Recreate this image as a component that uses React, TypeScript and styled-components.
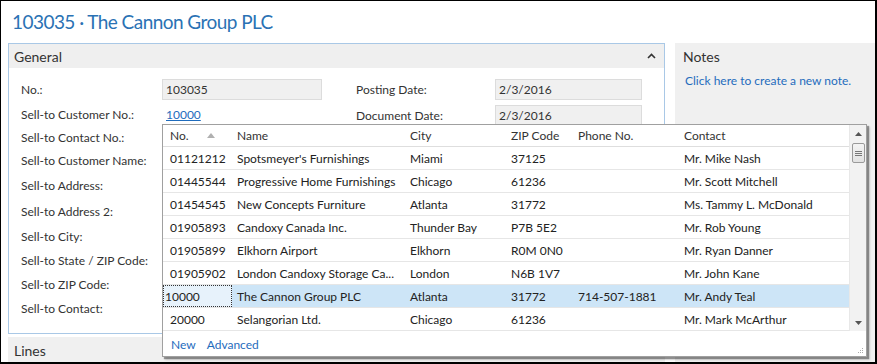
import React from "react";
import styled, { createGlobalStyle } from "styled-components";

const FONT = `"Segoe UI", Lato, "Liberation Sans", sans-serif`;

const Global = createGlobalStyle`
  html, body { margin: 0; padding: 0; background: #fff; }
  body { font-family: ${FONT}; font-size: 12px; color: #333; }
  * { box-sizing: border-box; }
`;

const Frame = styled.div`
  width: 877px;
  height: 364px;
  border-style: solid;
  border-color: #000;
  border-width: 1px 2px 2px 1px;
  background: #fff;
  position: relative;
  overflow: hidden;
  display: flex;
  flex-direction: column;
`;

const Title = styled.h1`
  margin: 0;
  height: 42px;
  padding: 9px 0 0 11px;
  font-family: ${FONT};
  font-weight: 400;
  font-size: 19px;
  letter-spacing: -0.55px;
  line-height: 24px;
  color: #2a72b4;
`;

const Content = styled.div`
  flex: 1;
  display: flex;
  gap: 10px;
  padding-left: 7px;
  min-height: 0;
`;

const LeftCol = styled.div`
  width: 657px;
  display: flex;
  flex-direction: column;
`;

const Panel = styled.section`
  border: 1px solid #a9c8e6;
  height: 291px;
  display: flex;
  flex-direction: column;
`;

const PanelHeader = styled.div`
  height: 24px;
  background: #efefef;
  display: flex;
  align-items: center;
  justify-content: space-between;
  padding: 0 8px 0 5px;
  font-size: 14px;
  color: #333;
`;

const PanelBody = styled.div`
  display: grid;
  grid-template-columns: 335px 1fr;
  padding: 8px 0 0 12px;
`;

const FieldCol = styled.div`
  display: flex;
  flex-direction: column;
`;

const Row = styled.div<{ $h: number }>`
  height: ${(p) => p.$h}px;
  display: grid;
  grid-template-columns: 141px 1fr;
  align-items: center;
`;

const RightRow = styled.div<{ $h: number }>`
  height: ${(p) => p.$h}px;
  display: grid;
  grid-template-columns: 139px 147px;
  align-items: center;
`;

const Label = styled.span`
  color: #333;
  white-space: nowrap;
`;

const Box = styled.div<{ $w: number }>`
  width: ${(p) => p.$w}px;
  height: 21px;
  background: #f0f0f0;
  border: 1px solid #dcdcdc;
  padding: 0 3px;
  display: flex;
  align-items: center;
  color: #333;
`;

const Link = styled.a<{ $u?: boolean }>`
  color: #1f6cbd;
  text-decoration: ${(p) => (p.$u ? "underline" : "none")};
  cursor: pointer;
  padding-left: 4px;
`;

const LinesHeader = styled.div`
  margin-top: 3px;
  flex: 1;
  background: #f0f0f0;
  padding: 5px 0 0 6px;
  font-size: 14px;
  color: #333;
`;

const Notes = styled.aside`
  flex: 1;
  background: #f0f0f0;
  padding: 5px 8px;
`;

const NotesTitle = styled.div`
  font-size: 14px;
  color: #333;
  height: 20px;
`;

const NotesLink = styled.a`
  display: block;
  margin-top: 5px;
  padding-left: 2px;
  color: #1f6cbd;
  font-size: 12px;
`;

const Dropdown = styled.div`
  position: absolute;
  left: 161px;
  top: 123px;
  width: 705px;
  height: 233px;
  background: #fff;
  border: 1px solid #a0a0a0;
  box-shadow: 2px 2px 1px rgba(0, 0, 0, 0.35), 3px 3px 2px rgba(0, 0, 0, 0.15);
  display: grid;
  grid-template-columns: 686px 17px;
  grid-template-rows: 206px 1fr;
`;

const Table = styled.div`
  display: flex;
  flex-direction: column;
`;

const cols = "69px 173px 101px 67px 106px 1fr";

const HeadRow = styled.div`
  height: 22px;
  display: grid;
  grid-template-columns: ${cols};
  align-items: center;
  border-bottom: 1px solid #dedede;
  color: #333;
`;

const DataRow = styled.div<{ $sel?: boolean }>`
  height: 23px;
  display: grid;
  grid-template-columns: ${cols};
  align-items: stretch;
  border-bottom: 1px solid #e6e6e6;
  background: ${(p) => (p.$sel ? "#cde5f7" : "#fff")};
  color: #222;
`;

const Cell = styled.div<{ $first?: boolean; $focus?: boolean }>`
  display: flex;
  align-items: center;
  padding-left: ${(p) => (p.$first ? 7 : 5)}px;
  white-space: nowrap;
  overflow: hidden;
  ${(p) =>
    p.$focus
      ? `background: #e7f2fb; border: 1px dotted #333; padding-left: 1px;`
      : ""}
`;

const SortArrow = styled.span`
  margin-left: 18px;
  width: 0;
  height: 0;
  border-left: 4px solid transparent;
  border-right: 4px solid transparent;
  border-bottom: 5px solid #b0b0b0;
`;

const Scrollbar = styled.div`
  background: #f2f2f2;
  border-left: 1px solid #e8e8e8;
  display: flex;
  flex-direction: column;
  align-items: center;
`;

const ScrollBtn = styled.div`
  height: 17px;
  display: flex;
  align-items: center;
  justify-content: center;
`;

const Thumb = styled.div`
  width: 13px;
  height: 20px;
  margin-top: 1px;
  border: 1px solid #9a9a9a;
  border-radius: 2px;
  background: linear-gradient(#f4f4f4, #e2e2e2);
  display: flex;
  align-items: center;
  justify-content: center;
`;

const Track = styled.div`
  flex: 1;
`;

const Footer = styled.div`
  display: flex;
  gap: 11px;
  align-items: center;
  padding-left: 8px;
  height: 24px;
  margin-top: 1px;
`;

const FooterLink = styled.a`
  color: #1f6cbd;
  font-size: 12px;
`;

const Grip = styled.div`
  display: flex;
  align-items: flex-end;
  justify-content: flex-end;
  padding: 0 2px 2px 0;
`;

const leftRows: [string, number][] = [
  ["No.:", 26],
  ["Sell-to Customer No.:", 24],
  ["Sell-to Contact No.:", 22],
  ["Sell-to Customer Name:", 25],
  ["Sell-to Address:", 25],
  ["Sell-to Address 2:", 26],
  ["Sell-to City:", 24],
  ["Sell-to State / ZIP Code:", 24],
  ["Sell-to ZIP Code:", 24],
  ["Sell-to Contact:", 24],
];

const data = [
  ["01121212", "Spotsmeyer's Furnishings", "Miami", "37125", "", "Mr. Mike Nash"],
  ["01445544", "Progressive Home Furnishings", "Chicago", "61236", "", "Mr. Scott Mitchell"],
  ["01454545", "New Concepts Furniture", "Atlanta", "31772", "", "Ms. Tammy L. McDonald"],
  ["01905893", "Candoxy Canada Inc.", "Thunder Bay", "P7B 5E2", "", "Mr. Rob Young"],
  ["01905899", "Elkhorn Airport", "Elkhorn", "R0M 0N0", "", "Mr. Ryan Danner"],
  ["01905902", "London Candoxy Storage Ca...", "London", "N6B 1V7", "", "Mr. John Kane"],
  ["10000", "The Cannon Group PLC", "Atlanta", "31772", "714-507-1881", "Mr. Andy Teal"],
  ["20000", "Selangorian Ltd.", "Chicago", "61236", "", "Mr. Mark McArthur"],
];

export default function App() {
  return (
    <>
      <Global />
      <Frame>
        <Title>103035 · The Cannon Group PLC</Title>
        <Content>
          <LeftCol>
            <Panel>
              <PanelHeader>
                <span>General</span>
                <svg width="9" height="6" viewBox="0 0 9 6">
                  <polyline points="1,5 4.5,1.5 8,5" fill="none" stroke="#333" strokeWidth="1.6" />
                </svg>
              </PanelHeader>
              <PanelBody>
                <FieldCol>
                  {leftRows.map(([l, h], i) => (
                    <Row key={l} $h={h}>
                      <Label>{l}</Label>
                      {i === 0 ? (
                        <Box $w={160}>103035</Box>
                      ) : i === 1 ? (
                        <span>
                          <Link $u>10000</Link>
                        </span>
                      ) : (
                        <span />
                      )}
                    </Row>
                  ))}
                </FieldCol>
                <FieldCol>
                  <RightRow $h={26}>
                    <Label>Posting Date:</Label>
                    <Box $w={147}>2/3/2016</Box>
                  </RightRow>
                  <RightRow $h={26}>
                    <Label>Document Date:</Label>
                    <Box $w={147}>2/3/2016</Box>
                  </RightRow>
                </FieldCol>
              </PanelBody>
            </Panel>
            <LinesHeader>Lines</LinesHeader>
          </LeftCol>
          <Notes>
            <NotesTitle>Notes</NotesTitle>
            <NotesLink>Click here to create a new note.</NotesLink>
          </Notes>
        </Content>

        <Dropdown>
          <Table>
            <HeadRow>
              <Cell $first>
                No.
                <SortArrow />
              </Cell>
              <Cell>Name</Cell>
              <Cell>City</Cell>
              <Cell>ZIP Code</Cell>
              <Cell>Phone No.</Cell>
              <Cell>Contact</Cell>
            </HeadRow>
            {data.map((r) => {
              const sel = r[0] === "10000";
              return (
                <DataRow key={r[0]} $sel={sel}>
                  {r.map((c, i) => (
                    <Cell key={i} $first={i === 0} $focus={sel && i === 0}>
                      {c}
                    </Cell>
                  ))}
                </DataRow>
              );
            })}
          </Table>
          <Scrollbar>
            <ScrollBtn>
              <svg width="7" height="4" viewBox="0 0 7 4">
                <polygon points="0,4 3.5,0 7,4" fill="#555" />
              </svg>
            </ScrollBtn>
            <Thumb>
              <svg width="7" height="7" viewBox="0 0 7 7">
                <path d="M0 1.5H7M0 3.5H7M0 5.5H7" stroke="#777" strokeWidth="1" />
              </svg>
            </Thumb>
            <Track />
            <ScrollBtn>
              <svg width="7" height="4" viewBox="0 0 7 4">
                <polygon points="0,0 3.5,4 7,0" fill="#555" />
              </svg>
            </ScrollBtn>
          </Scrollbar>
          <Footer>
            <FooterLink>New</FooterLink>
            <FooterLink>Advanced</FooterLink>
          </Footer>
          <Grip>
            <svg width="7" height="7" viewBox="0 0 7 7">
              <rect x="5" y="1" width="1" height="1" fill="#aaa" />
              <rect x="3" y="3" width="1" height="1" fill="#aaa" />
              <rect x="5" y="3" width="1" height="1" fill="#aaa" />
              <rect x="1" y="5" width="1" height="1" fill="#aaa" />
              <rect x="3" y="5" width="1" height="1" fill="#aaa" />
              <rect x="5" y="5" width="1" height="1" fill="#aaa" />
            </svg>
          </Grip>
        </Dropdown>
      </Frame>
    </>
  );
}
